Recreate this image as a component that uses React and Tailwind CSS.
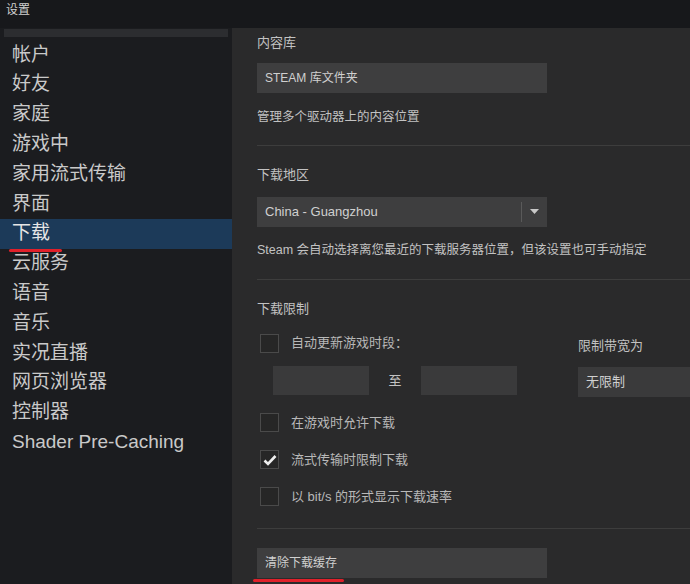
export default function App() {
  const f = { fontFamily: '"Liberation Sans","Noto Sans CJK SC",sans-serif' };
  const items = ["帐户","好友","家庭","游戏中","家用流式传输","界面","下载","云服务","语音","音乐","实况直播","网页浏览器","控制器","Shader Pre-Caching"];
  const Box = ({ checked }) => (
    <div className="w-[19px] h-[19px] border border-[#4a4a4a] bg-[#262626] flex items-center justify-center">
      {checked && <svg width="14" height="12" viewBox="0 0 14 12"><path d="M1.5 6.5 L5 10 L12.5 2" stroke="#eee" strokeWidth="2.6" fill="none"/></svg>}
    </div>
  );
  const Row = ({ checked, t }) => (
    <div className="flex items-center gap-[12px] h-[20px] ml-[3px] text-[13px] text-[#b8b8b8]"><Box checked={checked} />{t}</div>
  );
  return (
    <div style={f} className="w-[690px] h-[584px] overflow-hidden bg-[#17181b] flex flex-col">
      <div className="h-[28px] px-[6px] pt-[1px] text-[12px] text-[#d0d0d0]">设置</div>
      <div className="flex flex-1 min-h-0">
        <div className="w-[232px] bg-[#1b1c1f] flex flex-col">
          <div className="h-[8px] bg-[#2c2d30] mx-[4px] mt-[1px]"></div>
          <div className="pt-[3px]">
            {items.map((t) => (
              <div key={t} className={"h-[29.8px] flex items-center pl-[12px] text-[19px] text-[#c9c9c9] " + (t === "下载" ? "bg-[#1c3a59] text-[#e6e6e6]" : "")}>
                <span className="relative">{t}{t === "下载" && <span className="absolute left-[-3px] right-[-12px] bottom-[-4px] h-[3px] bg-[#e0202a] rounded"></span>}</span>
              </div>
            ))}
          </div>
        </div>
        <div className="flex-1 bg-[#2a2a2b] pl-[25px] text-[13px] text-[#c2c2c2]">
          <div className="pt-[5px]">内容库</div>
          <div className="w-[290px] h-[30px] mt-[10px] bg-[#3e3e3f] flex items-center px-[8px] text-[12px] text-[#d0d0d0]">STEAM 库文件夹</div>
          <div className="mt-[15px] text-[12.5px]">管理多个驱动器上的内容位置</div>
          <div className="h-px bg-[#3d3d3d] mt-[19px]"></div>
          <div className="mt-[19px]">下载地区</div>
          <div className="w-[290px] h-[30px] mt-[12px] bg-[#3e3e3f] flex items-center text-[13px] text-[#d0d0d0]">
            <span className="flex-1 px-[8px]">China - Guangzhou</span>
            <span className="w-px h-[20px] bg-[#5a5a5a]"></span>
            <span className="w-[25px] flex justify-center"><svg width="9" height="5" viewBox="0 0 9 5"><path d="M0 0h9L4.5 5z" fill="#c8c8c8"/></svg></span>
          </div>
          <div className="mt-[14px] text-[12.5px]">Steam 会自动选择离您最近的下载服务器位置，但该设置也可手动指定</div>
          <div className="h-px bg-[#3d3d3d] mt-[19px]"></div>
          <div className="mt-[19px]">下载限制</div>
          <div className="flex mt-[15px]">
            <div className="w-[321px]">
              <Row t="自动更新游戏时段：" />
              <div className="flex items-center mt-[13px] ml-[16px]">
                <div className="w-[96px] h-[29px] bg-[#3a3a3b]"></div>
                <div className="w-[52px] text-center">至</div>
                <div className="w-[96px] h-[29px] bg-[#3a3a3b]"></div>
              </div>
            </div>
            <div className="flex-1">
              <div className="mt-[3px]">限制带宽为</div>
              <div className="h-[30px] mt-[11px] bg-[#3a3a3b] flex items-center px-[8px] text-[13px] text-[#d0d0d0]">无限制</div>
            </div>
          </div>
          <div className="flex flex-col gap-[17px] mt-[16px]">
            <Row t="在游戏时允许下载" />
            <Row checked t="流式传输时限制下载" />
            <Row t="以 bit/s 的形式显示下载速率" />
          </div>
          <div className="h-px bg-[#3d3d3d] mt-[21px]"></div>
          <div className="w-[290px] h-[30px] mt-[19px] bg-[#3e3e3f] flex items-center px-[8px] text-[12px] text-[#d0d0d0]">清除下载缓存</div>
          <div className="h-[3px] w-[91px] bg-[#e0202a] ml-[-4px] mt-[1px] rounded"></div>
          <div className="mt-[6px] text-[12.5px] text-[#9a9a9a]">清除下载缓存可能会解决下载或启动应用时的问题</div>
        </div>
      </div>
    </div>
  );
}
